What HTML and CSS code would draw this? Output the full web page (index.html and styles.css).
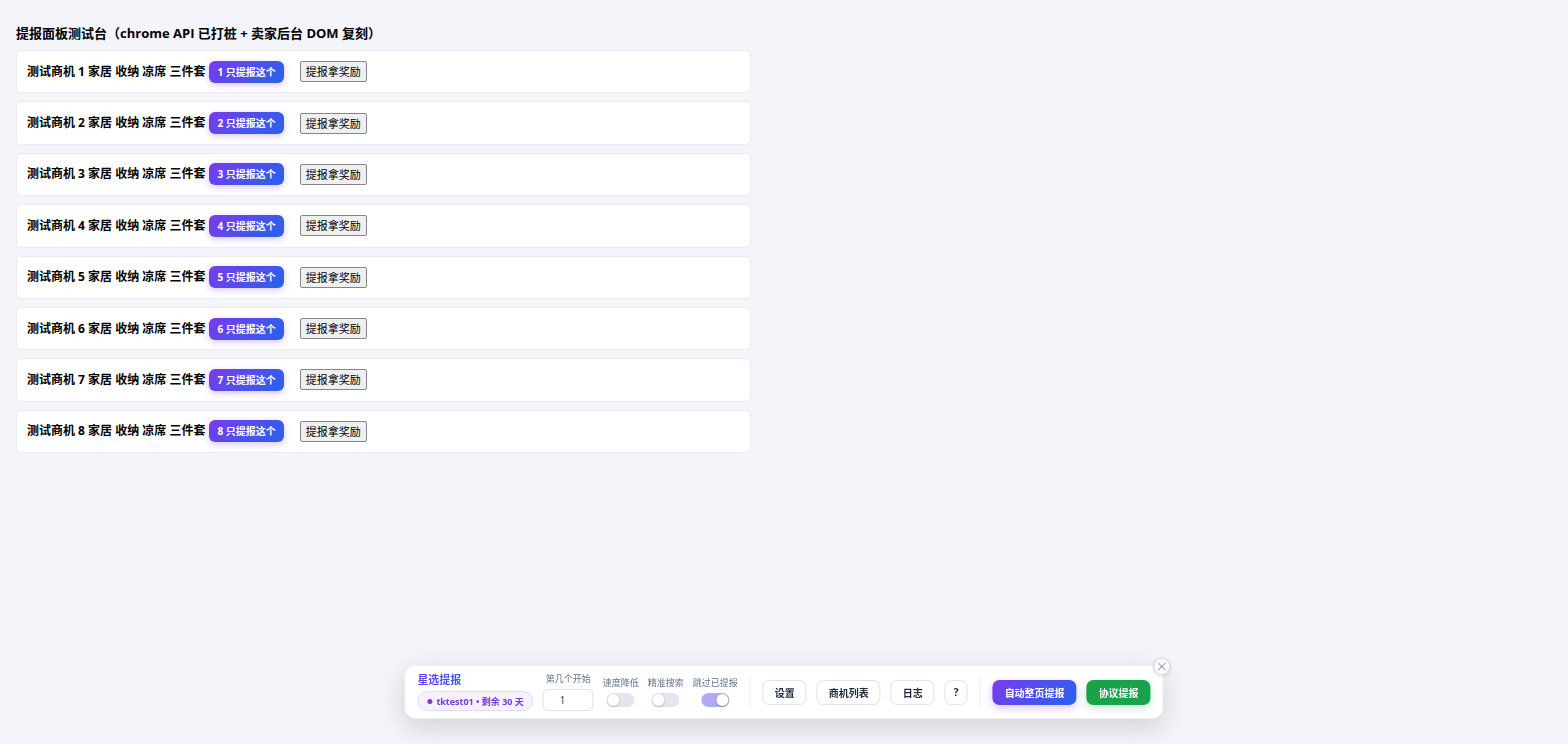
FILE: index.html
```
<!DOCTYPE html>
<html lang="zh-CN">
<head>
    <meta charset="UTF-8">
    <meta name="viewport" content="width=device-width, initial-scale=1.0">
    <title>提报面板测试台</title>
    <link rel="stylesheet" href="styles.css">
</head>
<body>
    <main>
        <h1>提报面板测试台（chrome API 已打桩 + 卖家后台 DOM 复刻）</h1>
        <div id="card-list" class="card-list"></div>
    </main>

    <section class="panel">
        <button class="close" aria-label="关闭">
            <svg viewBox="0 0 10 10" width="9" height="9"><path d="M1 1l8 8M9 1l-8 8" stroke="currentColor" stroke-width="1.1" stroke-linecap="round"/></svg>
        </button>

        <div class="brand">
            <div class="brand-name">星选提报</div>
            <div class="account"><span class="dot"></span>tktest01 • 剩余 30 天</div>
        </div>

        <div class="field">
            <label for="start-index">第几个开始</label>
            <input type="text" id="start-index" class="start-input" value="1">
        </div>

        <div class="field">
            <label for="slow">速度降低</label>
            <input type="checkbox" id="slow" class="switch">
        </div>
        <div class="field">
            <label for="exact">精准搜索</label>
            <input type="checkbox" id="exact" class="switch">
        </div>
        <div class="field">
            <label for="skip">跳过已提报</label>
            <input type="checkbox" id="skip" class="switch" checked>
        </div>

        <div class="group">
            <button class="btn">设置</button>
            <button class="btn">商机列表</button>
            <button class="btn">日志</button>
            <button class="btn btn-help">?</button>
        </div>

        <div class="group">
            <button class="btn btn-auto">自动整页提报</button>
            <button class="btn btn-protocol">协议提报</button>
        </div>
    </section>

    <script>
        const cardList = document.getElementById('card-list');

        for (let i = 1; i <= 8; i++) {
            const card = document.createElement('div');
            card.className = 'card';
            card.innerHTML = `
                <span class="card-title">测试商机 ${i} 家居 收纳 凉席 三件套</span>
                <button class="only-btn">${i} 只提报这个</button>
                <button class="reward-btn">提报拿奖励</button>`;
            cardList.appendChild(card);
        }
    </script>
</body>
</html>
```

FILE: styles.css
```
* {
    box-sizing: border-box;
}

body {
    margin: 0;
    padding: 24px 16px;
    background-color: #f4f5fa;
    color: #000;
    font-family: "Open Sans", "Noto Sans CJK SC", sans-serif;
}

button,
input {
    font-family: inherit;
    margin: 0;
}

button {
    cursor: pointer;
    white-space: nowrap;
}

h1 {
    margin: 0 0 8px;
    font-size: 13px;
    line-height: 18px;
    font-weight: 700;
}

.card-list {
    display: grid;
    gap: 8px;
    max-width: 735px;
    min-height: 403px;
}

.card {
    display: flex;
    align-items: center;
    padding: 9px 10px;
    background-color: #fff;
    border: 1px solid #ebebef;
    border-radius: 5px;
}

.card-title {
    font-size: 12px;
    line-height: 16px;
    font-weight: 700;
}

.only-btn {
    height: 22px;
    margin: 0 16px 0 4px;
    padding: 0 8px;
    border: none;
    border-radius: 6px;
    background: linear-gradient(135deg, #7c3aed, #2563eb);
    box-shadow: 0 2px 7px rgba(124, 58, 237, 0.3);
    color: #fff;
    font-size: 10px;
    line-height: 20px;
    font-weight: 700;
}

.reward-btn {
    height: 21px;
    padding: 0 5px;
    border: 1px solid #858585;
    border-radius: 2px;
    background-color: #efefef;
    color: #000;
    font-size: 11px;
    line-height: 19px;
}

/* floating panel */
.panel {
    position: fixed;
    bottom: 25px;
    left: 50%;
    transform: translateX(-50%);
    display: flex;
    align-items: center;
    gap: 9px;
    padding: 7px 12px;
    background-color: #fff;
    border: 1px solid #f0f1f5;
    border-radius: 11px;
    box-shadow: 0 8px 26px rgba(15, 23, 42, 0.16);
    white-space: nowrap;
}

.close {
    position: absolute;
    top: -8px;
    right: -8px;
    display: flex;
    align-items: center;
    justify-content: center;
    width: 17px;
    height: 17px;
    padding: 0;
    border: 1px solid #d5d8de;
    border-radius: 50%;
    background-color: #fff;
    box-shadow: 0 1px 4px rgba(15, 23, 42, 0.15);
    color: #777c86;
}

.brand {
    display: flex;
    flex-direction: column;
    align-items: flex-start;
    gap: 4px;
}

.brand-name {
    background: linear-gradient(135deg, #7c3aed, #2563eb);
    -webkit-background-clip: text;
    background-clip: text;
    color: transparent;
    font-size: 11px;
    line-height: 14px;
    font-weight: 700;
}

.account {
    display: flex;
    align-items: center;
    gap: 4px;
    height: 20px;
    padding: 0 9px;
    border: 1px solid #e4dafb;
    border-radius: 10px;
    background-color: #f5f1fe;
    color: #7839d4;
    font-size: 9px;
    font-weight: 700;
}

.dot {
    width: 5px;
    height: 5px;
    border-radius: 50%;
    background-color: #7839d4;
}

.field {
    display: flex;
    flex-direction: column;
    align-items: center;
    gap: 4px;
    color: #64748b;
    font-size: 9px;
    line-height: 12px;
}

.start-input {
    width: 51px;
    height: 22px;
    padding: 0 16px;
    border: 1px solid #dcdfe8;
    border-radius: 5px;
    background-color: #fff;
    color: #1e293b;
    font-size: 10px;
}

.switch {
    appearance: none;
    display: flex;
    align-items: center;
    width: 28px;
    height: 14px;
    padding: 1px;
    border-radius: 7px;
    background-color: #e2e6ee;
    cursor: pointer;
}

.switch::before {
    content: "";
    width: 12px;
    height: 12px;
    border-radius: 50%;
    background-color: #fff;
    box-shadow: 0 1px 2px rgba(15, 23, 42, 0.25);
}

.switch:checked {
    justify-content: flex-end;
    background: linear-gradient(135deg, #bda2f6, #9ab4f5);
}

.group {
    display: flex;
    align-items: center;
    gap: 10px;
    margin-left: 3px;
}

.group::before {
    content: "";
    width: 1px;
    height: 34px;
    margin-right: 2px;
    background-color: #eceef3;
}

.btn {
    height: 25px;
    padding: 0 11px;
    border: 1px solid #dfe1ec;
    border-radius: 7px;
    background-color: #fff;
    color: #1e293b;
    font-size: 10px;
    font-weight: 700;
}

.btn-help {
    padding: 0 8px;
}

.btn-auto {
    padding: 0 12px;
    border: none;
    background: linear-gradient(135deg, #7c3aed, #2563eb);
    box-shadow: 0 3px 9px rgba(124, 58, 237, 0.28);
    color: #fff;
}

.btn-protocol {
    padding: 0 12px;
    border: none;
    background-color: #16a34a;
    box-shadow: 0 3px 9px rgba(22, 163, 74, 0.25);
    color: #fff;
}
```
